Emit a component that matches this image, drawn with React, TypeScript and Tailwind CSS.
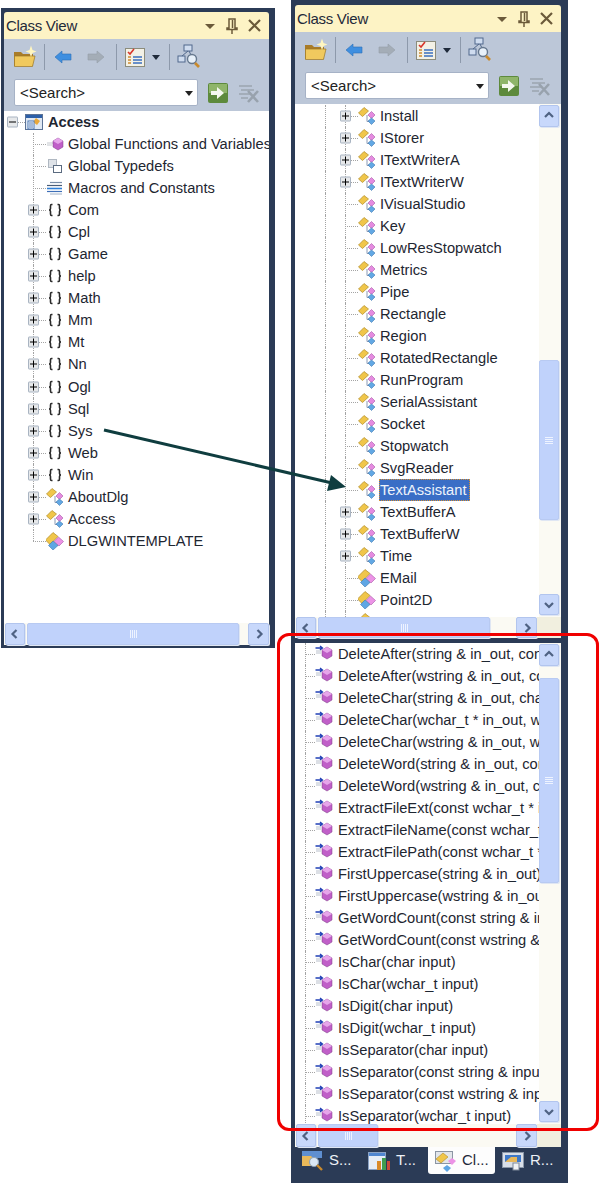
import React from "react";

const Px = ({ w = 18, h = 18, children }: { w?: number; h?: number; children: React.ReactNode }) => (
  <svg width={w} height={h} viewBox={`0 0 ${w} ${h}`} className="block shrink-0">{children}</svg>
);

const ClassIcon = () => (
  <Px>
    <path d="M6 0.5 L10.5 4 L4.5 9.5 L0.5 6 Z" fill="#f0c64a" stroke="#b08a25" strokeWidth="0.7" />
    <path d="M9 8 V14.5 H11" fill="none" stroke="#8a9ab5" strokeWidth="1" />
    <path d="M13.5 4.5 L17 8 L13.5 11.5 L10 8 Z" fill="#e58be0" stroke="#a858a8" strokeWidth="0.6" />
    <path d="M13.5 11 L17 14 L13.5 17.5 L10 14 Z" fill="#62a8e4" stroke="#3f78b0" strokeWidth="0.6" />
  </Px>
);
const StructIcon = () => (
  <Px>
    <path d="M7 0.5 L12 4.5 L4 12.5 L-0.5 8 Z" fill="#f0c64a" stroke="#b08a25" strokeWidth="0.7" />
    <path d="M12.5 5 L17.5 9.5 L13 14 L8 9.5 Z" fill="#ec93e6" stroke="#a858a8" strokeWidth="0.6" />
    <path d="M7 9 L12 13.5 L7 18 L2.5 13.5 Z" fill="#5fa6e4" stroke="#3f78b0" strokeWidth="0.6" />
  </Px>
);
const NamespaceIcon = () => (
  <Px>
    <path d="M6.5 3.5 H5.5 Q4.5 3.5 4.5 5 V7.5 Q4.5 9 3 9 Q4.5 9 4.5 10.5 V13 Q4.5 14.5 5.5 14.5 H6.5" fill="none" stroke="#2a2a2a" strokeWidth="1.6" />
    <path d="M11.5 3.5 H12.5 Q13.5 3.5 13.5 5 V7.5 Q13.5 9 15 9 Q13.5 9 13.5 10.5 V13 Q13.5 14.5 12.5 14.5 H11.5" fill="none" stroke="#2a2a2a" strokeWidth="1.6" />
  </Px>
);
const MethodIcon = () => (
  <Px>
    <path d="M0.5 3 H7 M5 1 L7.5 3 L5 5" fill="none" stroke="#1f3fb5" strokeWidth="1.3" />
    <path d="M1 6 H6 M1 8 H6" stroke="#b9c0cc" strokeWidth="1" />
    <path d="M12 2 L17 5 V11 L12 14 L7 11 V5 Z" fill="#c05fc8" stroke="#7c3e86" strokeWidth="0.5" />
    <path d="M12 2 L17 5 L12 8 L7 5 Z" fill="#e6a5ea" />
  </Px>
);
const GlobalFnIcon = () => (
  <Px>
    <path d="M1 8 H7 M1 10 H6" stroke="#c4c8ce" strokeWidth="1.2" />
    <path d="M12 3 L17 6 V12 L12 15 L7 12 V6 Z" fill="#c05fc8" stroke="#7c3e86" strokeWidth="0.5" />
    <path d="M12 3 L17 6 L12 9 L7 6 Z" fill="#e6a5ea" />
  </Px>
);
const TypedefIcon = () => (
  <Px>
    <rect x="2.5" y="2.5" width="8" height="8" fill="#dfe3e8" stroke="#b0b8c2" />
    <rect x="7.5" y="8.5" width="8" height="7" fill="#fff" stroke="#5b6b80" />
  </Px>
);
const MacroIcon = () => (
  <Px>
    <path d="M4 3.5 H16" stroke="#7a8ea8" strokeWidth="1.2" />
    <path d="M1 6.5 H16" stroke="#4a5d78" strokeWidth="1.2" />
    <path d="M1 9.5 H16" stroke="#2f7fd8" strokeWidth="1.6" />
    <path d="M1 12.5 H16" stroke="#3e6fb8" strokeWidth="1.2" />
    <path d="M4 15 H16" stroke="#9fb0c6" strokeWidth="1" />
  </Px>
);
const RootIcon = () => (
  <Px>
    <rect x="0.5" y="1.5" width="17" height="15" fill="#dfe8f3" stroke="#5c7396" />
    <rect x="1" y="2" width="16" height="3" fill="#2c5fa8" />
    <path d="M11 5 L15 8 L12 12 L8 9 Z" fill="#e9a83a" />
    <rect x="3" y="8" width="6" height="8" fill="#fff" stroke="#4b77b4" />
    <path d="M4 10 H8 M4 12 H8 M4 14 H8" stroke="#4b77b4" />
  </Px>
);

const Icons: Record<string, () => React.ReactElement> = {
  c: ClassIcon, s: StructIcon, n: NamespaceIcon, m: MethodIcon, g: GlobalFnIcon, t: TypedefIcon, a: MacroIcon,
};

const Box = ({ open = false }: { open?: boolean }) => (
  <span className="absolute top-1/2 left-[-5px] z-10 flex h-[11px] w-[11px] -translate-y-1/2 items-center justify-center rounded-[1px] border border-[#a9b4c2] bg-[#e6e8ea]">
    <span className="relative block h-[7px] w-[7px]">
      <span className="absolute left-0 top-[3px] h-px w-[7px] bg-black" />
      {!open && <span className="absolute left-[3px] top-0 h-[7px] w-px bg-black" />}
    </span>
  </span>
);

const Branch = ({ width = 13, box = false, last = false }: { width?: number; box?: boolean; last?: boolean }) => (
  <span className="relative shrink-0 self-stretch" style={{ width }}>
    <span className={`absolute left-0 top-0 border-l border-dotted border-[#a4a4a4] ${last ? "h-1/2" : "h-full"}`} />
    <span className="absolute left-0 top-1/2 w-full border-t border-dotted border-[#a4a4a4]" />
    {box && <Box />}
  </span>
);

type Item = { icon: string; label: string; box?: boolean; last?: boolean; selected?: boolean };

const Row = ({ item, lead, outer, gap = 4, branch = 13, height = 22 }: { item: Item; lead: number; outer?: number; gap?: number; branch?: number; height?: number }) => {
  const Icon = Icons[item.icon];
  return (
    <div className="flex items-center whitespace-nowrap" style={{ height }}>
      <span className="shrink-0" style={{ width: lead }} />
      {outer !== undefined && (
        <span className="shrink-0 self-stretch border-l border-dotted border-[#a4a4a4]" style={{ width: outer }} />
      )}
      <Branch box={item.box} last={item.last} width={branch} />
      <Icon />
      <span
        className={
          item.selected
            ? "ml-[3px] border border-dotted border-[#d89030] bg-[#3a6ec6] pr-[2px] leading-[20px] text-[#eef3fb]"
            : ""
        }
        style={item.selected ? undefined : { marginLeft: gap }}
      >
        {item.label}
      </span>
    </div>
  );
};

const Chevron = ({ dir }: { dir: "up" | "down" | "left" | "right" }) => {
  const d = {
    up: "M3 8 L7 4 L11 8",
    down: "M3 5 L7 9 L11 5",
    left: "M8.5 3 L4.5 7 L8.5 11",
    right: "M5.5 3 L9.5 7 L5.5 11",
  }[dir];
  return (
    <svg width="14" height="14" viewBox="0 0 14 14" className="block">
      <path d={d} fill="none" stroke="#4f6283" strokeWidth="2.2" />
    </svg>
  );
};

const SBtn = ({ dir, className = "" }: { dir: "up" | "down" | "left" | "right"; className?: string }) => (
  <div className={`flex shrink-0 items-center justify-center rounded-[2px] border border-[#b2c5ee] bg-[#c8d8fb] shadow-[1px_1px_0_#dfe6f3] ${className}`}>
    <Chevron dir={dir} />
  </div>
);

const Grip = ({ vertical = false }: { vertical?: boolean }) => (
  <div className={`flex ${vertical ? "flex-col" : "flex-row"} gap-px`}>
    {[0, 1, 2, 3].map((i) => (
      <span key={i} className={`${vertical ? "h-px w-[8px]" : "h-[8px] w-px"} bg-[#eef3ff]`} />
    ))}
  </div>
);

const Thumb = ({ vertical = false, className = "" }: { vertical?: boolean; className?: string }) => (
  <div className={`flex items-center justify-center rounded-[2px] border border-[#b8caf2] bg-[#c0d2fb] shadow-[1px_1px_0_#dfe6f3] ${className}`}>
    <Grip vertical={vertical} />
  </div>
);

const HScroll = ({ thumbClass, height, leftPad, corner }: { thumbClass: string; height: string; leftPad: string; corner: boolean }) => (
  <div className={`flex shrink-0 ${height}`}>
    <div className={`flex min-w-0 flex-1 items-center bg-[#fbfaf3] ${leftPad}`}>
      <SBtn dir="left" className="h-full w-[20px]" />
      <Thumb className={`ml-[2px] h-full ${thumbClass}`} />
      <div className="flex-1" />
      <SBtn dir="right" className="h-full w-[21px]" />
    </div>
    {corner && <div className="w-[24px] shrink-0 bg-[#f1efdf]" />}
  </div>
);

const VScroll = ({ gapTop, thumb }: { gapTop: string; thumb: string }) => (
  <div className="flex w-[22px] shrink-0 flex-col items-start bg-[#fbfaf3] pb-[2px]">
    <SBtn dir="up" className="mt-px h-[22px] w-[20px]" />
    <div className={gapTop} />
    <Thumb vertical className={`w-[20px] ${thumb}`} />
    <div className="flex-1" />
    <SBtn dir="down" className="h-[21px] w-[20px]" />
  </div>
);

const TitleBar = () => (
  <div className="flex h-[27px] shrink-0 items-center rounded-t-[3px] bg-[#fdf3c5] pl-[2px] pt-px text-[15px] tracking-[-0.3px] text-[#1f2a3a]">
    <span className="flex-1">Class View</span>
    <svg width="62" height="18" viewBox="0 0 62 18" className="mr-[4px] block shrink-0">
      <path d="M2 7 H12 L7 12 Z" fill="#6b5a3a" />
      <path d="M26 2 H32 V11 H34 V12.5 H24 V11 H26 Z M29.5 3 V11" fill="none" stroke="#6b5a3a" strokeWidth="1.5" />
      <path d="M29 12.5 V17" stroke="#6b5a3a" strokeWidth="1.5" />
      <path d="M46 3 L57 14 M57 3 L46 14" stroke="#6b5a3a" strokeWidth="2.2" />
    </svg>
  </div>
);

const Sep = () => <span className="block h-[26px] w-px shrink-0 bg-[#8d99ab]" />;

const Toolbar = () => (
  <div className="flex h-[72px] shrink-0 flex-col bg-[#bcc7d8]">
    <div className="flex h-[36px] items-center pl-[9px]">
      <svg width="24" height="24" viewBox="0 0 24 24" className="block shrink-0">
        <path d="M1 7 H8 L10 9 H20 V21 H1 Z" fill="#a97c28" />
        <path d="M1.5 11 H22 L19.5 21.5 H1.5 Z" fill="#f0c95e" stroke="#9a7526" strokeWidth="0.7" />
        <path d="M18 0.5 L19.5 5 L23.5 6.5 L19.5 8 L18 12 L16.5 8 L12.5 6.5 L16.5 5 Z" fill="#fff6c0" />
      </svg>
      <span className="ml-[7px]"><Sep /></span>
      <svg width="18" height="14" viewBox="0 0 18 14" className="ml-[9px] block shrink-0">
        <path d="M1 7 L8 1 V4 H17 V10 H8 V13 Z" fill="#3f8fe0" stroke="#2c6fb5" strokeWidth="0.6" />
      </svg>
      <svg width="18" height="14" viewBox="0 0 18 14" className="ml-[15px] block shrink-0">
        <path d="M17 7 L10 1 V4 H1 V10 H10 V13 Z" fill="#a4adb7" stroke="#96a0aa" strokeWidth="0.6" />
      </svg>
      <span className="ml-[11px]"><Sep /></span>
      <svg width="20" height="22" viewBox="0 0 20 22" className="ml-[8px] block shrink-0">
        <rect x="0.5" y="2.5" width="19" height="18" fill="#f3f1e6" stroke="#8c8c7c" />
        <path d="M3 6 L5 8 L9 3" fill="none" stroke="#d8362a" strokeWidth="1.6" />
        <path d="M8 11 H17 M8 14 H17 M8 17 H17" stroke="#3b6fc0" strokeWidth="1.5" />
        <path d="M3 11 H6 M3 14 H6 M3 17 H6" stroke="#d08a30" strokeWidth="1.5" />
      </svg>
      <svg width="8" height="5" viewBox="0 0 8 5" className="ml-[7px] block shrink-0"><path d="M0 0 H8 L4 5 Z" fill="#1f2a3a" /></svg>
      <span className="ml-[9px]"><Sep /></span>
      <svg width="24" height="26" viewBox="0 0 24 26" className="ml-[7px] block shrink-0">
        <rect x="7" y="1" width="8" height="6" fill="#cfdcef" stroke="#51688c" />
        <rect x="1" y="12" width="7" height="6" fill="#cfdcef" stroke="#51688c" />
        <path d="M11 7 L5 12 M12 7 L14 11" stroke="#51688c" />
        <circle cx="15" cy="15" r="4.5" fill="#e8f1fa" stroke="#66788e" strokeWidth="1.4" />
        <path d="M18 19 L22 23" stroke="#c98a2c" strokeWidth="2.6" />
      </svg>
    </div>
    <div className="mt-[4px] flex items-center pl-[10px]">
      <div className="flex h-[27px] w-[184px] shrink-0 items-center justify-between rounded-[2px] border border-[#a6b2c6] bg-white pl-[5px] pr-[4px] pt-px text-[15px] text-[#222]">
        <span>&lt;Search&gt;</span>
        <svg width="8" height="5" viewBox="0 0 8 5" className="block"><path d="M0 0 H8 L4 5 Z" fill="#222" /></svg>
      </div>
      <svg width="20" height="20" viewBox="0 0 20 20" className="ml-[10px] block shrink-0">
        <rect width="20" height="20" rx="2" fill="#5d8a3c" />
        <rect x="1" y="1" width="18" height="9" fill="#8fb56a" />
        <path d="M3 8 H9 V4 L16 10 L9 16 V12 H3 Z" fill="#f5f8ef" />
      </svg>
      <svg width="22" height="22" viewBox="0 0 22 22" className="ml-[10px] block shrink-0">
        <path d="M1 4 H14 M3 8 H16 M1 12 H12 M3 16 H10" stroke="#a3adb9" strokeWidth="1.8" />
        <path d="M10 9 L20 20 M20 9 L10 20" stroke="#98a2ad" strokeWidth="2.6" />
      </svg>
    </div>
  </div>
);

const g = (label: string, icon = "c", box = true): Item => ({ label, icon, box });

const leftItems: Item[] = [
  g("Global Functions and Variables", "g", false),
  g("Global Typedefs", "t", false),
  g("Macros and Constants", "a", false),
  ...["Com", "Cpl", "Game", "help", "Math", "Mm", "Mt", "Nn", "Ogl", "Sql", "Sys", "Web", "Win"].map((l) => g(l, "n")),
  g("AboutDlg"),
  g("Access"),
  { label: "DLGWINTEMPLATE", icon: "s", last: true },
];

const rightItems: Item[] = [
  g("Install"), g("IStorer"), g("ITextWriterA"), g("ITextWriterW"),
  ...["IVisualStudio", "Key", "LowResStopwatch", "Metrics", "Pipe", "Rectangle", "Region", "RotatedRectangle", "RunProgram", "SerialAssistant", "Socket", "Stopwatch", "SvgReader"].map((l) => g(l, "c", false)),
  { label: "TextAssistant", icon: "c", selected: true },
  g("TextBufferA"), g("TextBufferW"), g("Time"),
  g("EMail", "s", false), g("Point2D", "s", false), g("", "s", false),
];

const methods = [
  "DeleteAfter(string & in_out, const string & find)",
  "DeleteAfter(wstring & in_out, const wstring & find)",
  "DeleteChar(string & in_out, char input)",
  "DeleteChar(wchar_t * in_out, wchar_t input)",
  "DeleteChar(wstring & in_out, wchar_t input)",
  "DeleteWord(string & in_out, const string & word)",
  "DeleteWord(wstring & in_out, const wstring & word)",
  "ExtractFileExt(const wchar_t * input)",
  "ExtractFileName(const wchar_t * input)",
  "ExtractFilePath(const wchar_t * input)",
  "FirstUppercase(string & in_out)",
  "FirstUppercase(wstring & in_out)",
  "GetWordCount(const string & input)",
  "GetWordCount(const wstring & input)",
  "IsChar(char input)",
  "IsChar(wchar_t input)",
  "IsDigit(char input)",
  "IsDigit(wchar_t input)",
  "IsSeparator(char input)",
  "IsSeparator(const string & input)",
  "IsSeparator(const wstring & input)",
  "IsSeparator(wchar_t input)",
];

const Tab = ({ label, active, icon, className }: { label: string; active?: boolean; icon: React.ReactNode; className: string }) => (
  <div className={`flex h-[27px] shrink-0 items-center gap-[5px] rounded-b-[3px] text-[15px] ${className} ${active ? "bg-[#fdfdfd] text-[#1f2a3a]" : "text-[#eef1f6]"}`}>
    {icon}
    <span>{label}</span>
  </div>
);

export default function App() {
  return (
    <div className="relative flex h-[1184px] w-[600px] items-start overflow-hidden bg-white font-['Liberation_Sans',Arial,sans-serif] text-[14.7px] text-[#1e2631]">
      {/* Left panel */}
      <div className="ml-px mt-[8px] flex h-[640px] w-[274px] shrink-0 flex-col bg-[#2b3b56] pb-[3px] pl-[3px] pr-[6px] pt-[4px]">
        <TitleBar />
        <Toolbar />
        <div className="min-h-0 flex-1 overflow-hidden bg-white">
          <div className="flex h-[22px] items-center">
            <span className="relative ml-[8px] h-full w-[13px] shrink-0">
              <span className="absolute left-0 top-1/2 w-full border-t border-dotted border-[#a4a4a4]" />
              <Box open />
            </span>
            <RootIcon />
            <span className="ml-[5px] font-bold">Access</span>
          </div>
          {leftItems.map((it) => (
            <Row key={it.label + it.icon} item={it} lead={29} height={22.05} />
          ))}
        </div>
        <HScroll height="h-[22px]" leftPad="pl-px" thumbClass="w-[212px]" corner={false} />
      </div>

      {/* Right panel */}
      <div className="ml-[16px] flex h-[1183px] w-[277px] shrink-0 flex-col bg-[#2b3b56] pl-[4px] pr-[7px] pt-[5px]">
        <TitleBar />
        <Toolbar />
        <div className="flex h-[513px] shrink-0 overflow-hidden bg-white">
          <div className="min-w-0 flex-1 overflow-hidden pt-px">
            {rightItems.map((it, i) => (
              <Row key={i} item={it} lead={30} outer={20} />
            ))}
          </div>
          <VScroll gapTop="h-[233px] shrink-0" thumb="h-[160px]" />
        </div>
        <HScroll height="h-[21px]" leftPad="pl-px" thumbClass="w-[172px]" corner />
        <div className="h-[5px] shrink-0" />
        <div className="flex h-[481px] shrink-0 overflow-hidden bg-white">
          <div className="min-w-0 flex-1 overflow-hidden">
            {methods.map((m) => (
              <Row key={m} item={{ icon: "m", label: m }} lead={10} branch={10} gap={5} />
            ))}
          </div>
          <VScroll gapTop="h-[12px] shrink-0" thumb="h-[205px]" />
        </div>
        <HScroll height="h-[23px]" leftPad="pl-px" thumbClass="w-[60px]" corner />
        <div className="flex shrink-0 items-start pl-[6px]">
          <Tab
            label="S..."
            className="w-[67px]"
            icon={
              <svg width="23" height="22" viewBox="0 0 23 22" className="block">
                <rect x="1" y="1" width="20" height="7" fill="#5f8fd0" />
                <path d="M1 6 H10 L12 8 H14 V16 H1 Z" fill="#e8b85a" />
                <circle cx="13" cy="12" r="4.5" fill="#dbe8f5" stroke="#8fa3b8" strokeWidth="1.2" />
                <path d="M16 15 L21 20" stroke="#c98a2c" strokeWidth="2.4" />
              </svg>
            }
          />
          <Tab
            label="T..."
            className="w-[60px]"
            icon={
              <svg width="23" height="22" viewBox="0 0 23 22" className="block">
                <rect x="0.5" y="2.5" width="17" height="17" fill="#e6edf7" stroke="#8aa2c4" />
                <rect x="1" y="3" width="16" height="3" fill="#4f86d0" />
                <rect x="9" y="11" width="4" height="9" fill="#d98a2b" />
                <rect x="14" y="8" width="4" height="12" fill="#3f9c4f" />
                <rect x="19" y="11" width="3" height="9" fill="#c94a3a" />
              </svg>
            }
          />
          <Tab
            label="Cl..."
            active
            className="w-[67px] pl-[7px]"
            icon={
              <svg width="22" height="22" viewBox="0 0 22 22" className="block">
                <rect x="0.5" y="1.5" width="17" height="12" fill="#e2e6ea" stroke="#8c96a4" />
                <path d="M8 3 L13 7 L6 13 L1 9 Z" fill="#f0c64a" stroke="#b08a25" strokeWidth="0.6" />
                <path d="M17 8 L21 11 L17 15 L13 11 Z" fill="#ec93e6" />
                <path d="M12 15 L16 18 L12 22 L8 18 Z" fill="#5fa6e4" />
              </svg>
            }
          />
          <Tab
            label="R..."
            className="w-[65px] pl-[7px]"
            icon={
              <svg width="23" height="22" viewBox="0 0 23 22" className="block">
                <rect x="0.5" y="2.5" width="21" height="15" fill="#d9dfe8" stroke="#8b97a8" />
                <rect x="3" y="5" width="16" height="7" fill="#3e78c8" />
                <path d="M3 12 L9 7 H15 V12 Z" fill="#e8b85a" />
                <rect x="11" y="13" width="6" height="7" fill="#f0f2f5" stroke="#7c8797" />
              </svg>
            }
          />
        </div>
      </div>

      {/* Arrow annotation */}
      <svg width="600" height="1184" viewBox="0 0 600 1184" className="pointer-events-none absolute left-0 top-0">
        <path d="M104 430 L332 483" stroke="#0f3d3f" strokeWidth="3" fill="none" />
        <path d="M346 487 L327 491 L331 475 Z" fill="#0f3d3f" />
      </svg>
      {/* Red highlight */}
      <div className="pointer-events-none absolute left-[277px] top-[633px] h-[498px] w-[322px] rounded-[12px] border-[3px] border-[#f00000]" />
    </div>
  );
}
